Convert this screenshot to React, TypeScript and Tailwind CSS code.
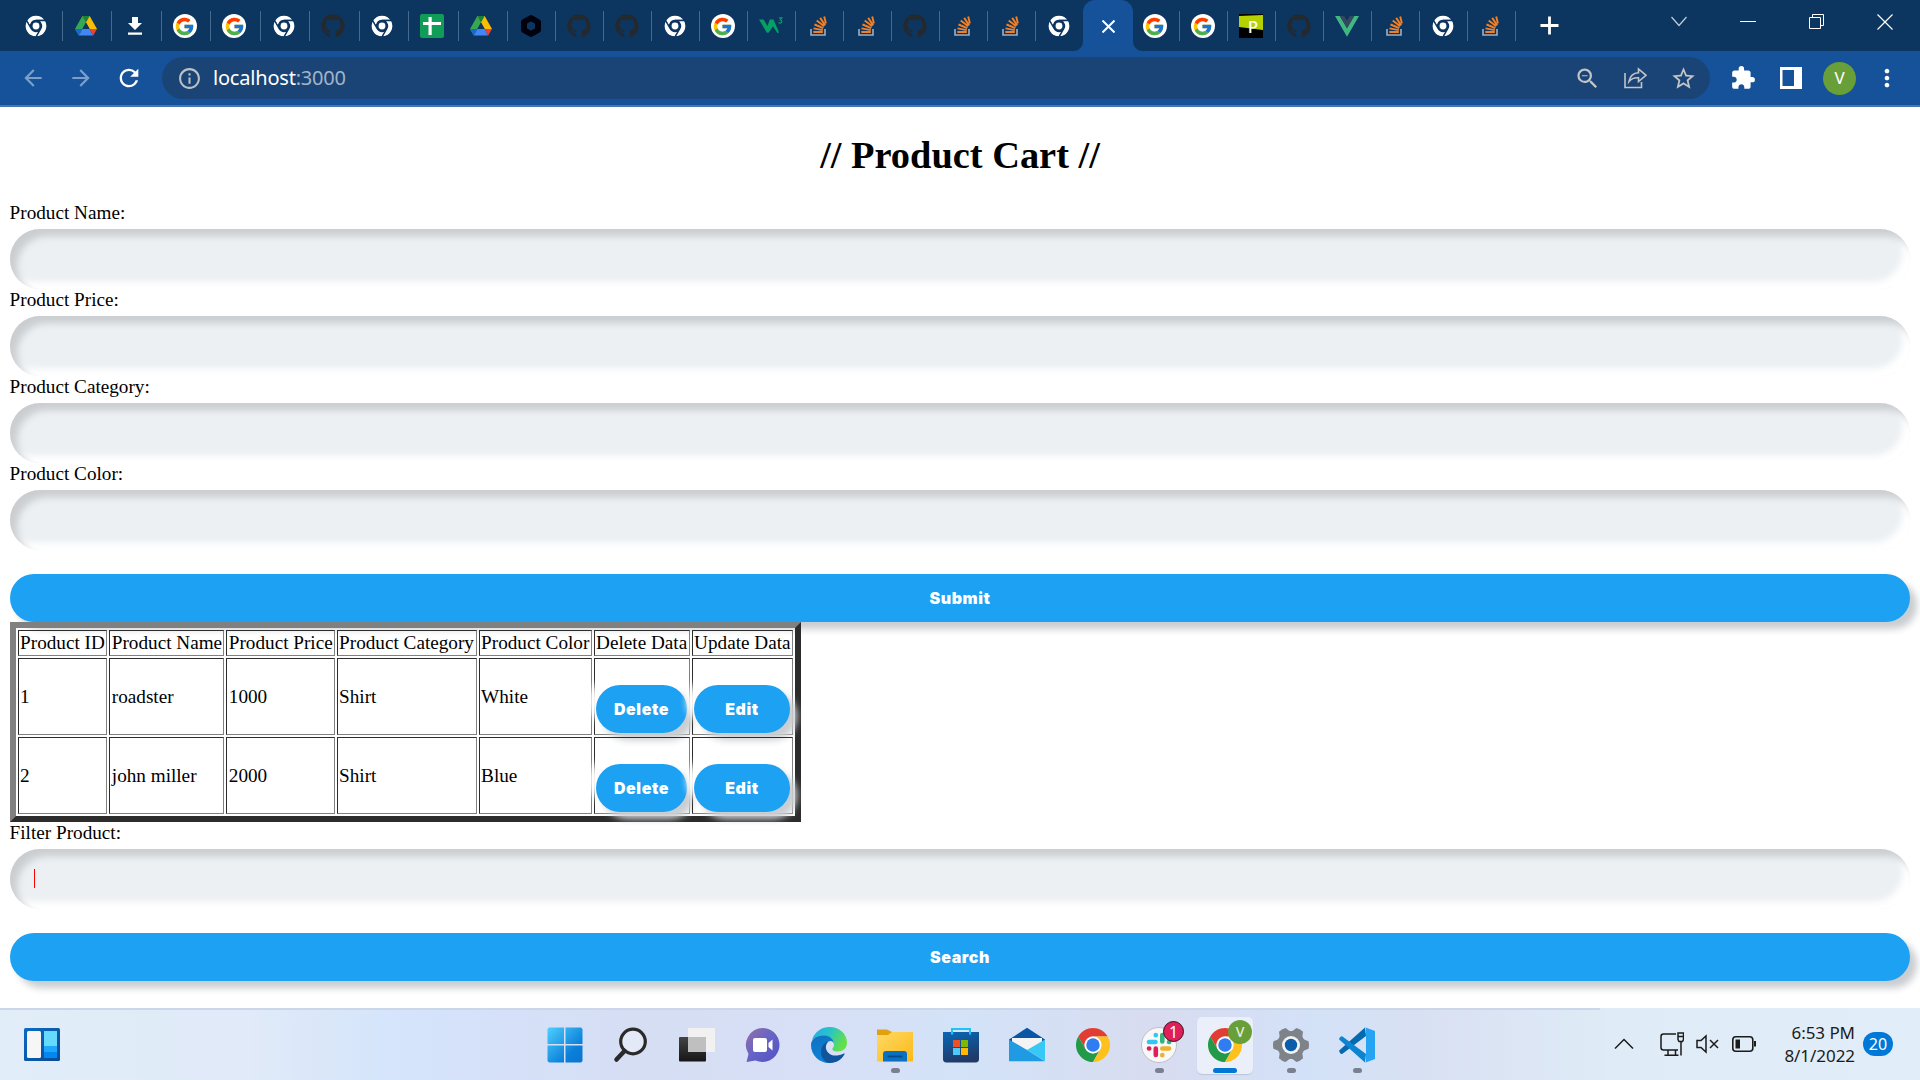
import React from "react";
import { FcGoogle } from "react-icons/fc";
import { FaGithub } from "react-icons/fa";
import {
  MdArrowBack,
  MdArrowForward,
  MdRefresh,
  MdInfoOutline,
  MdZoomOut,
  MdStarBorder,
  MdExtension,
  MdMoreVert,
} from "react-icons/md";

/* ---------- tab favicons ---------- */

const RED_ARC = "M24 12H44.78A24 24 0 0 0 3.22 12L13.61 30A12 12 0 0 1 24 12Z";
const GREEN_ARC = "M13.61 30L3.22 12A24 24 0 0 0 24 48L34.39 30A12 12 0 0 1 13.61 30Z";
const YELLOW_ARC = "M34.39 30L24 48A24 24 0 0 0 44.78 12H24A12 12 0 0 1 34.39 30Z";

const ChromeMono = () => (
  <svg width="22" height="22" viewBox="0 0 48 48">
    <g fill="#fff" stroke="#0c3560" strokeWidth="3">
      <path d={RED_ARC} />
      <path d={GREEN_ARC} />
      <path d={YELLOW_ARC} />
      <circle cx="24" cy="24" r="9.5" strokeWidth="4" />
    </g>
  </svg>
);

const Drive = () => (
  <svg width="22" height="20" viewBox="0 0 22 20">
    <path d="M7.3 0L11 6.6 3.8 19.6 0 13z" fill="#34a853" />
    <path d="M14.7 0L22 13h-7.4L7.3 0z" fill="#fbbc04" />
    <path d="M7.3 0h7.4L11 6.6z" fill="#188038" />
    <path d="M11 6.6L14.6 13H7.4z" fill="#0c3560" />
    <path d="M7.4 13h7.2l3.6 6.6H3.8z" fill="#4285f4" />
    <path d="M0 13h7.4l-3.6 6.6z" fill="#1967d2" />
    <path d="M14.6 13H22l-3.8 6.6z" fill="#ea4335" />
  </svg>
);

const Download = () => (
  <svg width="14" height="18" viewBox="0 0 14 18" fill="#fff">
    <path d="M4 0h6v6h4l-7 7-7-7h4zM0 15.5h14v2.2H0z" />
  </svg>
);

const Google = () => (
  <span className="flex size-6 items-center justify-center rounded-full bg-white">
    <FcGoogle size={21} />
  </span>
);

const Github = () => <FaGithub size={24} color="#24292e" />;

const Sheets = () => (
  <svg width="24" height="24" viewBox="0 0 24 24">
    <rect width="24" height="24" rx="2" fill="#0f9d58" />
    <path d="M3 8h18v3H3zM8.500 3h3.200v18H8.500z" fill="#fff" />
  </svg>
);

const Hexagon = () => (
  <svg width="22" height="24" viewBox="0 0 22 24">
    <path
      d="M11 4L18 8v8L11 20 4 16V8z"
      fill="none"
      stroke="#02020e"
      strokeWidth="6"
      strokeLinejoin="round"
    />
  </svg>
);

const W3 = () => (
  <svg width="24" height="18" viewBox="0 0 24 18">
    <path d="M0 2.500h4.500L8.500 9l2.300-6.500h3.600l5.200 11.500v2h-1.200L14 9.500 9.500 15.800H7.800z" fill="#04a064" />
    <path d="M19.800 .8h3.200l-1.700 2.200c2 .1 2.200 3-.2 3.200-.9 0-1.300-.3-1.500-.8" fill="none" stroke="#04a064" strokeWidth="1.200" />
  </svg>
);

const Stack = () => (
  <svg width="17" height="20" viewBox="0 0 17 20" fill="none">
    <path d="M1 13v6h14v-6" stroke="#a5adb8" strokeWidth="1.600" />
    <g stroke="#f48024" strokeWidth="1.900">
      <path d="M3.300 16h9.500M3.500 12.400l9.300 1.700M4.500 8.500l8.800 3.700M6.700 4.600l7.500 5.700M10.200 1.900l5 7.500M14.200.5l1.700 7" />
    </g>
  </svg>
);

const Pen = () => (
  <span className="relative block size-6 overflow-hidden bg-black">
    <svg width="24" height="24" viewBox="0 0 24 24">
      <path d="M0 2l24-1v15L0 13z" fill="#b5d100" />
    </svg>
    <span className="absolute inset-0 pt-[4px] pl-[4px] text-center font-['Noto_Sans'] text-[17px] leading-[17px] font-medium text-white">
      P
    </span>
  </span>
);

const Vue = () => (
  <svg width="24" height="21" viewBox="0 0 24 21">
    <path d="M0 0h4.800L12 12.200 19.200 0H24L12 20.700z" fill="#41b883" />
    <path d="M4.800 0h4.400L12 4.700 14.800 0h4.400L12 12.200z" fill="#35495e" />
  </svg>
);

const WIDE_TABS: React.FC[] = [
  ChromeMono, Drive, Download, Google, Google, ChromeMono, Github, ChromeMono, Sheets, Drive,
];

const NARROW_TABS: React.FC[] = [
  Hexagon, Github, Github, ChromeMono, Google, W3, Stack, Stack, Github, Stack, Stack, ChromeMono,
];

const RIGHT_TABS: React.FC[] = [Google, Google, Pen, Github, Vue, Stack, ChromeMono, Stack];

const Tab = ({ icon: Icon, wide, last }: { icon: React.FC; wide?: boolean; last?: boolean }) => (
  <div className={`flex shrink-0 items-center ${wide ? "w-[49.44px]" : "w-[48px]"}`}>
    <span className={`flex flex-1 items-center justify-center ${wide ? "pr-[3px]" : "pr-px"}`}>
      <Icon />
    </span>
    <span className={last ? "w-px shrink-0" : "h-[30px] w-px shrink-0 bg-[#46698e]"} />
  </div>
);

const TabBar = () => (
  <div className="flex h-[51px] bg-[#0c3560]">
    <div className="flex h-[52px] w-[1518px] shrink-0 items-center pl-[13.6px]">
      {WIDE_TABS.map((icon, i) => (
        <Tab key={i} icon={icon} wide />
      ))}
      {NARROW_TABS.map((icon, i) => (
        <Tab key={i} icon={icon} last={i === NARROW_TABS.length - 1} />
      ))}
      <div className="relative -mx-px flex h-[52px] w-[50px] shrink-0 items-center justify-center rounded-t-[12px] bg-[#15529a] pl-px">
        <svg className="absolute bottom-px -left-[9px]" width="9" height="9" viewBox="0 0 9 9">
          <path d="M9 0A9 9 0 0 1 0 9H9z" fill="#15529a" />
        </svg>
        <svg className="absolute -right-[9px] bottom-px" width="9" height="9" viewBox="0 0 9 9">
          <path d="M0 0A9 9 0 0 0 9 9H0z" fill="#15529a" />
        </svg>
        <svg width="13" height="13" viewBox="0 0 13 13" stroke="#fff" strokeWidth="2">
          <path d="M.5.5l12 12M12.500.5l-12 12" />
        </svg>
      </div>
      {RIGHT_TABS.map((icon, i) => (
        <Tab key={i} icon={icon} />
      ))}
    </div>
    <div className="flex flex-1 justify-between pr-[27px] pl-[22px]">
      <svg className="mt-[16px]" width="19" height="19" viewBox="0 0 19 19" stroke="#fff" strokeWidth="2.800">
        <path d="M.5 9.500h18M9.500.5v18" />
      </svg>
      <div className="flex gap-[53px]">
        <svg className="mt-[16px]" width="16" height="12" viewBox="0 0 16 12" fill="none" stroke="#c3cfdc" strokeWidth="1.200">
          <path d="M.5 1L8 9.500 15.500 1" />
        </svg>
        <svg className="mt-[21px]" width="16" height="1" viewBox="0 0 16 1">
          <path d="M0 0h16v1H0z" fill="#fff" />
        </svg>
        <svg className="mt-[14px]" width="15" height="15" viewBox="0 0 15 15" fill="none" stroke="#fff">
          <path d="M.5 3.500h11v11H.5zM3.500 3V.5h11v11H12" />
        </svg>
        <svg className="mt-[14px]" width="16" height="16" viewBox="0 0 16 16" stroke="#fff" strokeWidth="1.200">
          <path d="M.5.5l15 15M15.500.5l-15 15" />
        </svg>
      </div>
    </div>
  </div>
);

/* ---------- address bar ---------- */

const Toolbar = () => (
  <div className="flex h-[56px] items-center border-b-2 border-[#4676b2] bg-[#15529a]">
    <div className="flex w-[162px] items-center gap-[22px] pl-[20px]">
      <MdArrowBack size={26} color="#7c9fca" />
      <MdArrowForward size={26} color="#7c9fca" />
      <MdRefresh className="-ml-px" size={28} color="#fff" />
    </div>
    <div className="flex h-[42px] w-[1548px] items-center rounded-full bg-[#1a4475] pr-[13px] pl-[15px]">
      <MdInfoOutline size={25} color="#bdc1c6" />
      <span className="ml-[11px] flex-1 font-['Noto_Sans'] text-[20px] leading-[28px] tracking-[-0.2px] text-white">
        localhost<span className="text-[#a3b4c8]">:3000</span>
      </span>
      <div className="flex items-center gap-[23px] text-[#c1c4c8]">
        <MdZoomOut size={27} />
        <svg width="23" height="22" viewBox="0 0 23 22" fill="none" stroke="currentColor" strokeWidth="1.600">
          <path d="M1 6v14.500h16.500V15M5 14.500C6 9 9 6 14.500 5.800V2L22 8.300l-7.500 6.200v-3.700C10 10.500 7.300 11.700 5 14.500z" />
        </svg>
        <MdStarBorder size={27} />
      </div>
    </div>
    <div className="flex flex-1 items-center pl-[20px]">
      <MdExtension size={26} color="#fff" />
      <svg className="ml-[24px]" width="22" height="22" viewBox="0 0 22 22">
        <path d="M0 0h22v22H0zM2.500 3v16H14V3z" fill="#fff" fillRule="evenodd" />
      </svg>
      <span className="ml-[21px] flex size-[33px] items-center justify-center rounded-full bg-[#689f38] font-['Noto_Sans'] text-[17px] text-white">
        V
      </span>
      <MdMoreVert className="ml-[17px]" size={28} color="#fff" />
    </div>
  </div>
);

/* ---------- product page ---------- */

const Field = ({ label, focused }: { label: string; focused?: boolean }) => (
  <div>
    <label className="-ml-[0.4px] block h-[27px] leading-[22px]">{label}</label>
    <div className="flex h-[60px] items-start rounded-[30px] bg-[#ecf0f3] pt-[20px] pl-[24px] shadow-[inset_7.2px_7.2px_7.2px_#cbced1,inset_-7.2px_-7.2px_7.2px_#fff]">
      {focused && <span className="h-[19px] w-px bg-[#ff0000]" />}
    </div>
  </div>
);

const Button = ({ children }: { children: string }) => (
  <button className="mt-[24px] block h-[48px] w-full rounded-[24px] bg-[#1da1f2] text-center font-['Inter'] text-[16px] leading-[48px] font-black tracking-[0.6px] text-white shadow-[7.2px_7.2px_7.2px_#cbced1,-7.2px_-7.2px_7.2px_#fff]">
    {children}
  </button>
);

const HEADERS = [
  "Product ID", "Product Name", "Product Price", "Product Category", "Product Color", "Delete Data", "Update Data",
];

const PRODUCTS = [
  ["1", "roadster", "1000", "Shirt", "White"],
  ["2", "john miller", "2000", "Shirt", "Blue"],
];

const CELL =
  "border border-t-[#2c2c2c] border-r-[#808080] border-b-[#808080] border-l-[#2c2c2c] whitespace-nowrap align-middle";

/* The second and third columns sit slightly further in than the others. */
const inset = (i: number) => (i === 1 || i === 2 ? "pl-[1.8px]" : "pl-[1.1px]");

const ProductTable = () => (
  <table className="h-[200px] w-[791px] table-fixed border-separate border-spacing-[2px] border-[6px] border-t-[#808080] border-r-[#2c2c2c] border-b-[#2c2c2c] border-l-[#808080] leading-[22px]">
    <colgroup>
      <col className="w-[89px]" />
      <col className="w-[115px]" />
      <col className="w-[109px]" />
      <col className="w-[140px]" />
      <col className="w-[113px]" />
      <col className="w-[96px]" />
      <col className="w-[101px]" />
    </colgroup>
    <tbody>
      <tr className="h-[26px]">
        {HEADERS.map((h, i) => (
          <td key={h} className={`${CELL} ${inset(i)}`}>{h}</td>
        ))}
      </tr>
      {PRODUCTS.map((row) => (
        <tr key={row[0]} className="h-[77px]">
          {row.map((v, i) => (
            <td key={i} className={`${CELL} ${inset(i)}`}>{v}</td>
          ))}
          <td className={`${CELL} pr-[2px] pl-px`}><Button>Delete</Button></td>
          <td className={`${CELL} pr-[2px] pl-px`}><Button>Edit</Button></td>
        </tr>
      ))}
    </tbody>
  </table>
);

const Page = () => (
  <main className="h-[901px] bg-white px-[10px] pt-[26px] font-['Liberation_Serif',serif] text-[19.2px] text-black">
    <h1 className="mb-[25px] text-center text-[38.4px] leading-[44px] font-bold">// Product Cart //</h1>
    <Field label="Product Name:" />
    <Field label="Product Price:" />
    <Field label="Product Category:" />
    <Field label="Product Color:" />
    <Button>Submit</Button>
    <ProductTable />
    <Field label="Filter Product:" focused />
    <Button>Search</Button>
  </main>
);

/* ---------- taskbar ---------- */

const Widgets = () => (
  <svg width="36" height="33" viewBox="0 0 36 33">
    <defs>
      <linearGradient id="wd" x1="0" y1="0" x2="1" y2="1">
        <stop stopColor="#0a6cc4" />
        <stop offset="1" stopColor="#0b4a94" />
      </linearGradient>
    </defs>
    <rect width="36" height="33" rx="1.500" fill="url(#wd)" />
    <rect x="3" y="3" width="14" height="27" rx="1.500" fill="#f6f6f7" />
    <path d="M20 3h13v15H20z" fill="#66d9ff" />
    <path d="M20 18h13v6H20z" fill="#1ea7fb" />
    <path d="M20 24h13v6H20z" fill="#0388f2" />
  </svg>
);

const Start = () => (
  <svg width="36" height="36" viewBox="0 0 36 36">
    <defs>
      <linearGradient id="st" x1="0" y1="0" x2="36" y2="36" gradientUnits="userSpaceOnUse">
        <stop stopColor="#4fd0ff" />
        <stop offset=".7" stopColor="#0a7fd9" />
        <stop offset="1" stopColor="#0a74d0" />
      </linearGradient>
    </defs>
    <path d="M2 .5h15v16.500H.5V2zM18.500.5H34L35.500 2v15h-17zM.5 18.500H17v17H2L.5 34zM18.500 18.500h17V34L34 35.500H18.500z" fill="url(#st)" />
  </svg>
);

const Search = () => (
  <svg width="36" height="36" viewBox="0 0 36 36" fill="none" stroke="#2a2a2b">
    <circle cx="20" cy="14.500" r="12.300" fill="#e3e9f6" strokeWidth="3.200" />
    <path d="M11.500 24L3.500 32.500" strokeWidth="4.500" strokeLinecap="round" />
  </svg>
);

const TaskView = () => (
  <svg width="36" height="36" viewBox="0 0 36 36">
    <defs>
      <linearGradient id="tv" x1="0" y1="0" x2="0" y2="1">
        <stop stopColor="#444" />
        <stop offset="1" stopColor="#161616" />
      </linearGradient>
    </defs>
    <rect x="0" y="10" width="27" height="24.500" rx="1" fill="url(#tv)" />
    <rect x="9" y="1" width="27" height="24" rx="1" fill="#f1f1f2" />
    <path d="M9 10h18v15H9z" fill="#bfbfc0" />
  </svg>
);

const Chat = () => (
  <svg width="36" height="36" viewBox="0 0 36 36">
    <defs>
      <linearGradient id="ch" x1="0" y1="0" x2="1" y2="1">
        <stop stopColor="#9370a8" />
        <stop offset=".5" stopColor="#6663c6" />
        <stop offset="1" stopColor="#5250c4" />
      </linearGradient>
    </defs>
    <path d="M18 1a17 17 0 1 1-7.500 32.500L1.500 35 3.500 27A17 17 0 0 1 18 1z" fill="url(#ch)" />
    <rect x="8" y="11" width="14" height="14" rx="2" fill="#fff" />
    <path d="M23.500 16l4-3.500v11l-4-3.500z" fill="#fff" />
  </svg>
);

const Edge = () => (
  <svg width="36" height="36" viewBox="0 0 36 36">
    <defs>
      <linearGradient id="e1" x1="0" y1="0" x2="1" y2=".4">
        <stop stopColor="#27a9e8" />
        <stop offset=".5" stopColor="#28c3c8" />
        <stop offset="1" stopColor="#63e04b" />
      </linearGradient>
      <linearGradient id="e2" x1="0" y1="0" x2=".6" y2="1">
        <stop stopColor="#1270bf" />
        <stop offset="1" stopColor="#0a85dc" />
      </linearGradient>
    </defs>
    <path d="M1 13C4 4 11 0 18.500 0 29 0 36 7.500 36 15.500c0 6-4.500 9-9.500 9-3.500 0-5.500-1-5-3 .2-.8 1.500-1.500 1.500-3.800 0-4-4-8-10-8C8 9.700 3.500 11 1 13z" fill="url(#e1)" />
    <path d="M0 18C0 12 6 8.500 13 8.500c6 0 10 4 10 9 0-3-3-4.500-5.500-3-3.500 2.500-3.500 9 .5 12.500 4 3.300 10 2.800 15-.5-2 5-8 9.500-15 9.500C8 36 0 28 0 18z" fill="url(#e2)" />
    <path d="M17.500 14.500c-3.500 2.500-3.500 7-1 10.500 3.500 4.500 10 4.500 16.500 1.500.6-.3 1 .1.700.6C30.500 33 25 36 19 36c-5 0-9-5.500-9-11 0-5 3-9.500 7.500-10.500z" fill="#0f549d" />
  </svg>
);

const Explorer = () => (
  <svg width="36" height="36" viewBox="0 0 36 36">
    <defs>
      <linearGradient id="ex" x1="0" y1="0" x2="1" y2="1">
        <stop stopColor="#ffd966" />
        <stop offset="1" stopColor="#fbb917" />
      </linearGradient>
    </defs>
    <path d="M0 2.500h10L15 5h21v4H0z" fill="#dfa011" />
    <path d="M0 8h11l4-3h21v29.500H0z" fill="url(#ex)" />
    <path d="M6 34.500V27c0-2 1-3 3-3h18c2 0 3 1 3 3v7.500z" fill="#0a70c2" />
    <path d="M10.500 29.500h15" stroke="#064a8c" strokeWidth="1.800" />
  </svg>
);

const Store = () => (
  <svg width="36" height="36" viewBox="0 0 36 36">
    <defs>
      <linearGradient id="ms" x1="0" y1="0" x2=".3" y2="1">
        <stop stopColor="#0868b8" />
        <stop offset="1" stopColor="#203a68" />
      </linearGradient>
    </defs>
    <path d="M0 5h36v27c0 2-1 3.500-3.500 3.500h-29C1 35.500 0 34 0 32z" fill="url(#ms)" />
    <path d="M9 7.500V2h18v5.500" fill="none" stroke="#21c3f4" strokeWidth="2" />
    <path d="M10 13h7v7h-7z" fill="#f25022" />
    <path d="M18 13h7v7h-7z" fill="#7fba00" />
    <path d="M10 21h7v7h-7z" fill="#4fc8fa" />
    <path d="M18 21h7v7h-7z" fill="#ffb900" />
  </svg>
);

const Mail = () => (
  <svg width="36" height="36" viewBox="0 0 36 36">
    <path d="M0 12.500L18 .8l18 11.700v5H0z" fill="#0a55a5" />
    <path d="M3 11h30v11H3z" fill="#f4f4f5" />
    <path d="M0 12.500L18 23l18 11.200H0z" fill="#209be3" />
    <path d="M36 12.500L18 23l18 11z" fill="#37c8f5" />
  </svg>
);

const Chrome = () => (
  <svg width="34" height="34" viewBox="0 0 48 48">
    <path d={RED_ARC} fill="#e23d32" />
    <path d={GREEN_ARC} fill="#229a48" />
    <path d={YELLOW_ARC} fill="#fdc01d" />
    <circle cx="24" cy="24" r="12" fill="#fff" />
    <circle cx="24" cy="24" r="9.500" fill="#2f7df0" />
  </svg>
);

const Slack = () => (
  <span className="relative block size-[36px]">
    <svg width="36" height="36" viewBox="0 0 36 36" strokeWidth="4.600" strokeLinecap="round">
      <circle cx="18" cy="18" r="17.500" fill="#f8f8f8" stroke="#bdbfc8" strokeWidth="1" />
      <path d="M8 15h6.500M14.800 8v.3" stroke="#36c5f0" />
      <path d="M21.300 8v6.500M28 15h.2" stroke="#2eb67d" />
      <path d="M21.300 21.500H28M21.300 28v.2" stroke="#ecb22e" />
      <path d="M14.800 21.500V28M8 21.500h.2" stroke="#e01e5a" />
    </svg>
    <span className="absolute -top-[6px] -right-[7px] flex size-[21px] items-center justify-center rounded-full border-[1.5px] border-[#35101c] bg-[#e01e5a] font-['Noto_Sans'] text-[16px] leading-none text-white">
      1
    </span>
  </span>
);

const ChromeActive = () => (
  <span className="relative block size-[34px]">
    <Chrome />
    <span className="absolute -top-[8px] -right-[10px] flex size-[24px] items-center justify-center rounded-full bg-[#689f38] font-['Noto_Sans'] text-[14px] leading-none font-medium text-[#e4edd9]">
      V
    </span>
  </span>
);

const Settings = () => (
  <svg width="36" height="36" viewBox="0 0 36 36">
    <g fill="#7e8389">
      <circle cx="18" cy="18" r="14" />
      {[30, 90, 150, 210, 270, 330].map((a) => (
        <path key={a} d="M12 6l2.200-5.500Q18-.5 21.800.5L24 6z" transform={`rotate(${a} 18 18)`} />
      ))}
    </g>
    <circle cx="18" cy="18" r="9" fill="#f1f2f4" />
    <circle cx="18" cy="18" r="6.200" fill="#0b5cab" />
  </svg>
);

const VsCode = () => (
  <svg width="36" height="36" viewBox="0 0 36 36">
    <path d="M27 9L3.500 26.700Q2.500 27.500 1.500 26.500L.5 25q-.8-1 .2-2L26 .5z" fill="#0569b0" />
    <path d="M27 27L3.500 9.500Q2.500 8.800 1.500 9.700L.5 11q-.8 1 .2 2L26 35.500z" fill="#0d84d0" />
    <path d="M26 .3L36 4v28l-10 3.800c1-.6 1-1.300 1-2.300V2.500c0-1 0-1.700-1-2.200z" fill="#27a3f4" />
  </svg>
);

const APPS: { icon: React.FC; mark?: "open" | "active" }[] = [
  { icon: Start },
  { icon: Search },
  { icon: TaskView },
  { icon: Chat },
  { icon: Edge },
  { icon: Explorer, mark: "open" },
  { icon: Store },
  { icon: Mail },
  { icon: Chrome },
  { icon: Slack, mark: "open" },
  { icon: ChromeActive, mark: "active" },
  { icon: Settings, mark: "open" },
  { icon: VsCode, mark: "open" },
];

const AppSlot = ({ icon: Icon, mark }: { icon: React.FC; mark?: "open" | "active" }) => (
  <div className="flex w-[66px] shrink-0 justify-center">
    <div
      className={`flex h-[57px] w-[56px] flex-col items-center justify-end rounded-[5px] ${
        mark === "active" ? "bg-[#eaeff9] shadow-[0_1px_1px_#bcc5d8]" : ""
      }`}
    >
      <span className="flex h-[36px] items-center">
        <Icon />
      </span>
      <span className="flex h-[11px] items-end">
        {mark === "open" && <span className="mb-px block h-[5px] w-[9px] rounded-full bg-[#7b8090]" />}
        {mark === "active" && <span className="mb-px block h-[5px] w-[24px] rounded-full bg-[#0078d4]" />}
      </span>
    </div>
  </div>
);

const Taskbar = () => (
  <footer className="flex h-[72px] bg-[linear-gradient(90deg,#e1edf8_0%,#e0eaf8_13%,#d5e5fb_20%,#d5e1f9_26%,#d6def4_33%,#d6e0f6_45%,#d3e3f8_50%,#d8dcf0_60%,#d3e1f8_68%,#d9e1f2_75%,#dfebf7_84%,#e1edf9_100%)]">
    <div className="flex w-[1600px] border-t-2 border-[#cbd6e8]">
      <div className="w-[532px] shrink-0 pt-[18px] pl-[24px]">
        <Widgets />
      </div>
      <div className="flex pt-[7px]">
        {APPS.map((app, i) => (
          <AppSlot key={i} {...app} />
        ))}
      </div>
    </div>
    <div className="flex flex-1 items-center pl-[14px] text-[#1b1b1b]">
      <svg width="20" height="12" viewBox="0 0 20 12" fill="none" stroke="currentColor" strokeWidth="1.500">
        <path d="M1 10.500L10 1.500l9 9" />
      </svg>
      <svg className="ml-[26px]" width="24" height="24" viewBox="0 0 24 24" fill="none" stroke="currentColor" strokeWidth="1.500">
        <path d="M16 2H3.500Q1 2 1 4.500v11Q1 18 3.500 18H18M8 18.500V23M15.500 18.500V23M4.500 23.200h14M21 10v13.500" />
        <path d="M18 1h5.500v6.500L22.500 9.500H19L18 7.500zM18 4.500h5.500" />
      </svg>
      <svg className="ml-[12px]" width="23" height="20" viewBox="0 0 23 20" fill="none" stroke="currentColor" strokeWidth="1.500">
        <path d="M1 6.500h4L10 2v16l-5-4.500H1zM14 6l8 8M22 6l-8 8" />
      </svg>
      <svg className="ml-[13px]" width="25" height="16" viewBox="0 0 25 16">
        <rect x=".8" y=".8" width="20" height="14.400" rx="3" fill="none" stroke="currentColor" strokeWidth="1.600" />
        <path d="M3.500 3.500H8v9H3.500zM22 5h2v5.500h-2z" fill="currentColor" />
      </svg>
      <div className="ml-auto text-right font-['Noto_Sans'] text-[17px] leading-[23px] tracking-[-0.05px]">
        <div>6:53 PM</div>
        <div>8/1/2022</div>
      </div>
      <span className="mr-[27px] ml-[8px] flex h-[24px] w-[30px] items-center justify-center rounded-full bg-[#0078d7] font-['Noto_Sans'] text-[16px] text-white">
        20
      </span>
    </div>
  </footer>
);

export default function App() {
  return (
    <div className="h-[1080px] w-[1920px] overflow-hidden">
      <TabBar />
      <Toolbar />
      <Page />
      <Taskbar />
    </div>
  );
}
